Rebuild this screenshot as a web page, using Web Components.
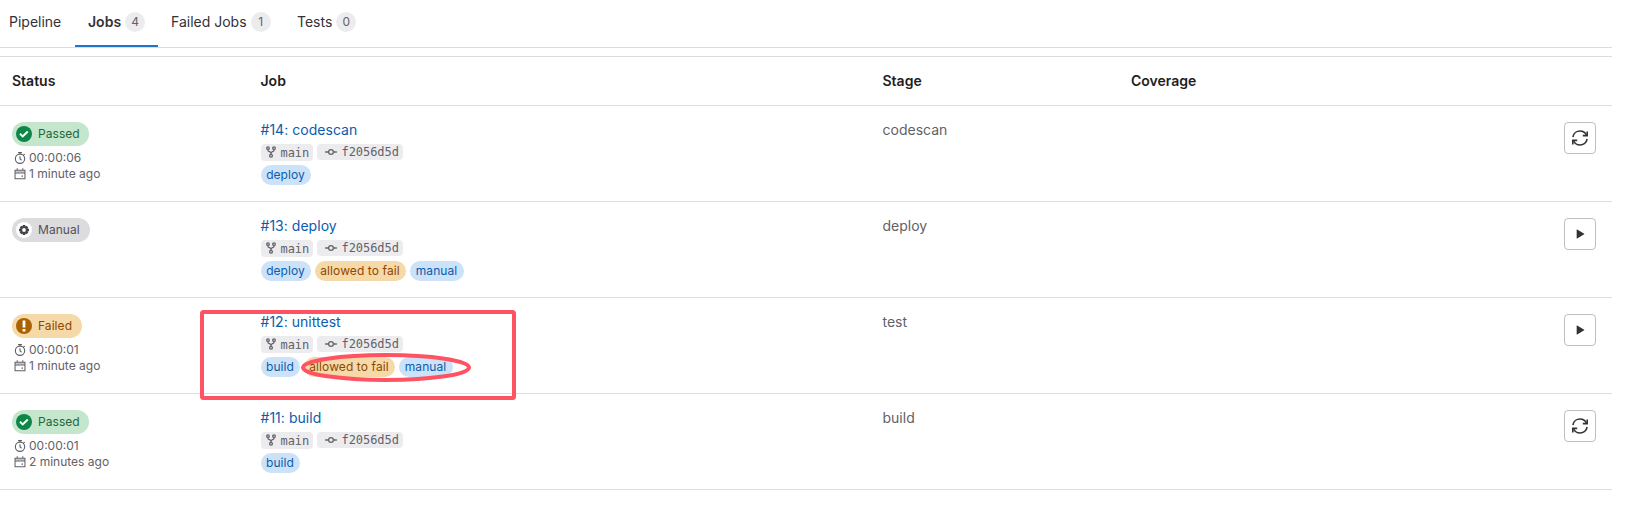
<!DOCTYPE html>
<html lang="en"><head><meta charset="utf-8"><title>Pipeline jobs</title>
<style>
body{margin:0;background:#fff;font-family:Inter,"Noto Sans",sans-serif;font-size:14px;line-height:20px;color:#333238}
</style></head><body>
<pipeline-page></pipeline-page>
<script>
const icons={
retry:'<path fill="none" stroke="currentColor" stroke-width="1.6" d="M.9 7C1.5 3.3 4.6 1 8 1c2.9 0 5.2 1.5 6.4 4M15.1 9c-.6 3.7-3.7 6-7.1 6-2.9 0-5.2-1.5-6.4-4"/><path fill="none" stroke="currentColor" stroke-width="1.6" d="M15.2 1.6v4h-4.4M.8 14.4v-4h4.4"/>',
play:'<path fill="currentColor" d="M4.2 3.2v9.6c0 .4.3.5.6.3l8-4.7c.3-.2.3-.6 0-.8l-8-4.7c-.3-.2-.6 0-.6.3z"/>',
passed:'<circle cx="8" cy="8" r="8" fill="#108548"/><path fill="none" stroke="#fff" stroke-width="2" d="M4 7.7l2.7 2.7L11.8 5.5"/>',
failed:'<circle cx="8" cy="8" r="8" fill="#ab6100"/><path stroke="#fff" stroke-width="2.8" d="M8 2.4v7M8 11v2.6"/>',
manual:'<circle cx="8" cy="8" r="8" fill="#fff"/><path stroke="#434248" stroke-width="2.6" d="M8 3v10M3 8h10M4.6 4.6l6.8 6.8M11.4 4.6l-6.8 6.8"/><circle cx="8" cy="8" r="3.8" fill="#434248"/><circle cx="8" cy="8" r="1.9" fill="#fff"/>',
timer:'<g fill="none" stroke="currentColor" stroke-width="1.5"><circle cx="8" cy="9" r="6.2"/><path d="M5.4.8h5.2M8 1v2M12.3 4.5l1.9-1.7M8 5.6V9l2 2"/></g>',
calendar:'<g fill="none" stroke="currentColor" stroke-width="1.4"><path d="M1.4 3h13.2v11.3H1.4zM4.3.2v3M11.7.2v3M1.4 6.6h13.2M10 10.8h2"/><path stroke-width="3" opacity=".35" d="M1.4 4.8h13.2"/></g>',
branch:'<g fill="none" stroke="currentColor" stroke-width="1.7"><circle cx="4" cy="2.9" r="1.7"/><circle cx="12" cy="2.9" r="1.7"/><circle cx="8" cy="13" r="1.9"/><path d="M4 4.6v1c0 2.4 4 1.6 4 4.2V11M12 4.6v1c0 2.4-4 1.6-4 4.2"/></g>',
commit:'<g fill="none" stroke="currentColor" stroke-width="1.7"><circle cx="8" cy="8" r="3.2"/><path d="M.2 8h4.6M11.2 8h4.6"/></g>'};
class Base extends HTMLElement{
 connectedCallback(){if(!this.shadowRoot){this.attachShadow({mode:'open'}).innerHTML=this.view()}}
 at(n){return this.getAttribute(n)||''}
}
customElements.define('gl-icon',class extends Base{view(){return `<style>:host{display:block;flex:none;width:var(--s,16px);height:var(--s,16px)}svg{display:block;width:100%;height:100%}</style><svg viewBox="0 0 16 16">${icons[this.at('name')]}</svg>`}});
customElements.define('nav-tab',class extends Base{view(){return `<style>
:host{display:flex;box-sizing:border-box;height:47px;padding:0 12px 3px 13px;align-items:center;gap:4px;white-space:nowrap;width:var(--w)}
:host([active]){font-weight:600;box-shadow:inset 0 -2px #1f75cb}
.l{letter-spacing:var(--ls,0)} .c{width:20px;height:20px;border-radius:10px;background:#ececef;color:#626168;font-size:12px;font-weight:400;line-height:20px;text-align:center}
</style><span class="l"><slot></slot></span>${this.hasAttribute('count')?`<span class="c">${this.at('count')}</span>`:''}`}});
customElements.define('status-badge',class extends Base{view(){return `<style>
:host{display:flex;box-sizing:border-box;height:24px;padding:0 4px;gap:6px;align-items:center;border-radius:12px;font-size:12px;width:77px;background:#c3e6cd;color:#24663b;letter-spacing:.06px;white-space:nowrap}
:host([type=manual]){background:#dcdcde;color:#535158;width:78px}
:host([type=failed]){background:#f5d9a8;color:#8f4700;width:70px}
</style><gl-icon name="${this.at('type')}"></gl-icon><slot></slot>`}});
customElements.define('meta-line',class extends Base{view(){return `<style>
:host{display:flex;height:16px;align-items:center;gap:3px;padding-left:2px;font-size:12px;line-height:16px;color:#626168;white-space:nowrap}gl-icon{--s:12px;margin-top:-1px}
</style><gl-icon name="${this.at('icon')}"></gl-icon><slot></slot>`}});
customElements.define('ref-chip',class extends Base{view(){return `<style>
:host{display:flex;box-sizing:border-box;height:17px;width:52px;padding-left:4px;gap:4px;align-items:center;border-radius:4px;background:#ececef;color:#626168;font:12px/16px "DejaVu Sans Mono","Liberation Mono",monospace;letter-spacing:-.05px;white-space:nowrap}
:host([icon=commit]){width:86px;height:16px;padding-left:8px;gap:5px}gl-icon{--s:12px}:host([icon=branch]) gl-icon{margin-top:-2px}
</style><gl-icon name="${this.at('icon')}"></gl-icon><slot></slot>`}});
customElements.define('job-tag',class extends Base{view(){return `<style>
:host{display:block;height:20px;width:var(--w);border-radius:10px;background:#cbe2f9;color:#0b5cad;font-size:12px;line-height:20px;text-align:center;white-space:nowrap;letter-spacing:.06px}
:host([warn]){background:#f5d9a8;color:#8f4700;letter-spacing:.1px}</style><slot></slot>`}});
customElements.define('action-button',class extends Base{view(){return `<style>
:host{display:flex;box-sizing:border-box;width:32px;height:32px;align-items:center;justify-content:center;border:1px solid #bfbfc3;border-radius:4px;color:#333238}
:host([icon=play]) gl-icon{--s:14px}
</style><gl-icon name="${this.at('icon')}"></gl-icon>`}});
customElements.define('table-row',class extends Base{view(){return `<style>
:host{display:grid;box-sizing:border-box;grid-template-columns:248.5px 622px 248.5px 1fr 60px;height:96px;border-bottom:1px solid #dcdcde}
:host([head]){height:50px;border-top:1px solid #dcdcde;font-weight:600;color:#1f1e24}
::slotted(*){padding:14px 12px 0}
</style><slot></slot>`}});
const tagW={deploy:50,build:39,manual:54,'allowed to fail':91};
customElements.define('job-row',class extends Base{view(){
 const s=this.at('status'),name=this.at('name'),id=this.at('job');
 return `<style>
:host{display:block}
.status,.action{padding-top:16px}
.info{padding-top:4px}
a{display:block;color:#0b5cad;height:20px;line-height:20px;letter-spacing:.03px}
.refs,.tags{display:flex;gap:4px;align-items:flex-start}
.refs{margin-top:4px;height:21px}
.stage{color:#626168}
</style><table-row><div class="status"><status-badge type="${s.toLowerCase()}">${s}</status-badge>${this.at('time')?`<div class="info"><meta-line icon="timer">${this.at('time')}</meta-line><meta-line icon="calendar">${this.at('ago')}</meta-line></div>`:''}</div>
<div><a>#${id}: ${name}</a><div class="refs"><ref-chip icon="branch">main</ref-chip><ref-chip icon="commit">f2056d5d</ref-chip></div><div class="tags">${this.at('tags').split(',').map(t=>`<job-tag ${t[0]=='a'?'warn':''} style="--w:${tagW[t]}px">${t}</job-tag>`).join('')}</div></div>
<div class="stage">${this.at('stage')}</div><div></div><div class="action"><action-button icon="${this.at('action')}"></action-button></div></table-row>`}});
customElements.define('callout-marks',class extends Base{view(){return `<style>
:host{position:absolute;left:200px;top:310px;width:316px;height:90px;pointer-events:none}svg{display:block}
</style><svg width="316" height="90" fill="none" stroke="#ff5263" stroke-width="4"><rect x="2" y="2" width="312" height="86" rx="1.5"/><ellipse cx="186" cy="57.5" rx="83" ry="12.5"/></svg>`}});
customElements.define('pipeline-page',class extends Base{view(){return `<style>
:host{display:block;position:relative;width:1612px;height:505px;overflow:hidden}
nav{display:flex;height:47px;border-bottom:1px solid #dcdcde;margin-bottom:8px}
</style><nav><nav-tab style="--w:79px;margin-left:-4px">Pipeline</nav-tab><nav-tab active count="4" style="--w:83px">Jobs</nav-tab><nav-tab count="1" style="--w:126px">Failed Jobs</nav-tab><nav-tab count="0">Tests</nav-tab></nav>
<main><table-row head><div>Status</div><div>Job</div><div>Stage</div><div>Coverage</div><div></div></table-row>
<job-row status="Passed" time="00:00:06" ago="1 minute ago" job="14" name="codescan" tags="deploy" stage="codescan" action="retry"></job-row>
<job-row status="Manual" job="13" name="deploy" tags="deploy,allowed to fail,manual" stage="deploy" action="play"></job-row>
<job-row status="Failed" time="00:00:01" ago="1 minute ago" job="12" name="unittest" tags="build,allowed to fail,manual" stage="test" action="play"></job-row>
<job-row status="Passed" time="00:00:01" ago="2 minutes ago" job="11" name="build" tags="build" stage="build" action="retry"></job-row>
</main><callout-marks></callout-marks>`}});
</script></body></html>
